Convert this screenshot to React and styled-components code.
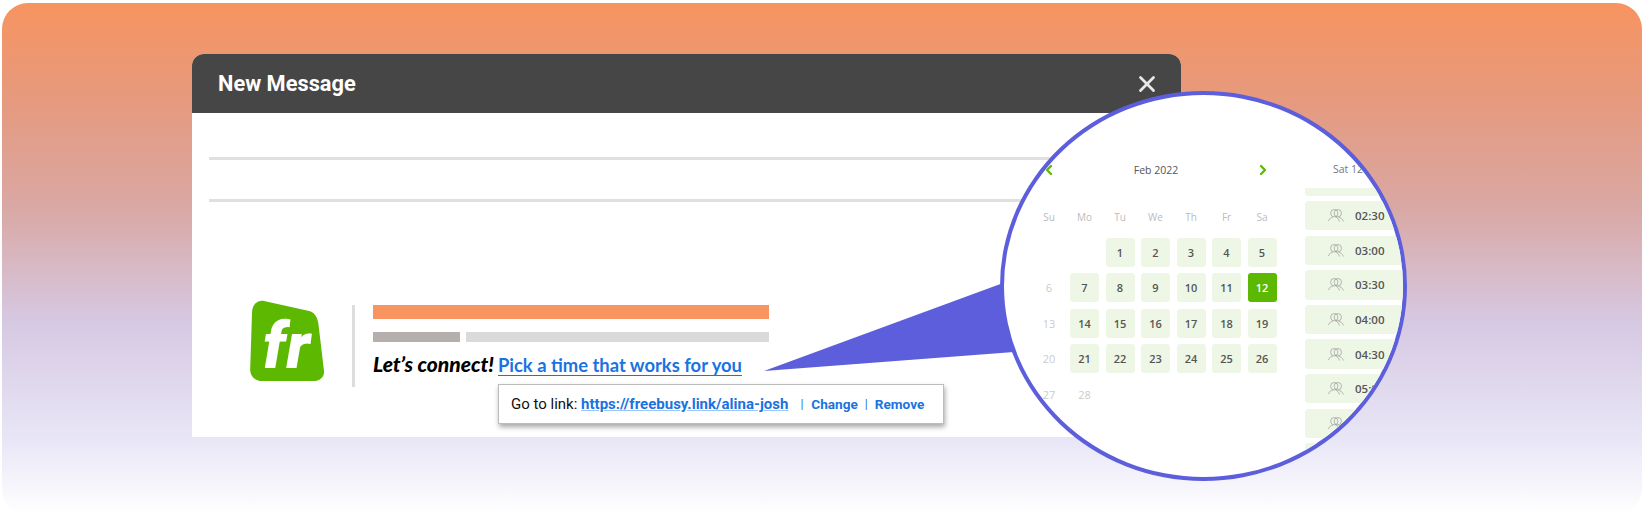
import React from 'react'
import styled, { createGlobalStyle } from 'styled-components'
import { ChevronLeft, ChevronRight, X } from 'lucide-react'

const GlobalStyle = createGlobalStyle`
  html, body { margin: 0; padding: 0; background: #fff; }
  body { font-family: "Roboto", "Liberation Sans", sans-serif; }
`
const Page = styled.div`
  width: 1644px;
  height: 528px;
  padding: 3px 2px 13px;
  box-sizing: border-box;
  overflow: hidden;
`
const Panel = styled.div`
  position: relative;
  height: 100%;
  padding: 51px 0 0 190px;
  box-sizing: border-box;
  border-radius: 26px;
  background: linear-gradient(180deg, #f79460 0%, #e59a80 20%, #d9a8a4 40%, #d6c8e2 62%, #e8e6f6 85%, #ffffff 100%);
`
const Window = styled.div`
  position: relative;
  width: 989px;
  height: 383px;
  background: #fff;
  border-radius: 12px 12px 0 0;
`
const Header = styled.div`
  height: 59px;
  padding: 0 21px 0 26px;
  display: flex;
  align-items: center;
  justify-content: space-between;
  background: #464646;
  border-radius: 12px 12px 0 0;
  color: #fff;
`
const Title = styled.div`
  font-size: 21.8px;
  font-weight: 700;
`
const Field = styled.div`
  height: ${(props) => props.height}px;
  margin: 0 16px 0 17px;
  border-bottom: 3px solid #e0e0e0;
`
const Signature = styled.div`
  display: flex;
  gap: 28px;
  padding: 99px 0 0 58px;
`
const Copy = styled.div`
  width: 396px;
  height: 82px;
  margin-top: 4px;
  padding-left: 18px;
  border-left: 3px solid #dddddd;
`
const BrandBar = styled.div`
  height: 13.5px;
  margin-bottom: 13.5px;
  background: #f79460;
`
const MetaRow = styled.div`
  display: flex;
  gap: 6px;
  height: 10px;
`
const Meta = styled.div`
  height: 10px;
  width: ${(props) => props.width}px;
  flex: ${(props) => (props.width ? 'none' : 1)};
  background: ${(props) => props.color};
`
const Connect = styled.div`
  margin-top: 10px;
  font-family: "Lato", sans-serif;
  font-size: 21px;
  line-height: 24px;
  font-weight: 900;
  font-style: italic;
  white-space: nowrap;
  color: #000;
`
const PickLink = styled.a`
  margin-left: 4px;
  font-size: 18.4px;
  font-style: normal;
  font-weight: 700;
  color: #1a73e0;
  text-decoration: underline;
  text-underline-offset: 3px;
`
const LinkPopup = styled.div`
  position: absolute;
  left: 306px;
  top: 330px;
  width: 446px;
  height: 40px;
  padding-left: 12px;
  box-sizing: border-box;
  display: flex;
  align-items: center;
  background: #fff;
  border: 1px solid #bcbcbc;
  box-shadow: 1px 3px 5px rgba(0, 0, 0, 0.35);
  font-size: 15px;
  color: #111;
  white-space: pre;
`
const PopupUrl = styled.a`
  font-weight: 700;
  color: #1a73e0;
  text-decoration: underline;
  text-decoration-color: #9cc6f5;
`
const PopupAction = styled.span`
  font-weight: 700;
  font-size: 13.6px;
  color: #1a73e0;
`
const Pipe = styled.span`
  margin: ${(props) => (props.wide ? '0 8px 0 12px' : '0 7px 0 7px')};
  font-size: 12px;
  color: #1a73e0;
`
const Tail = styled.svg`
  position: absolute;
  left: 762px;
  top: 276px;
`
const Bubble = styled.div`
  position: absolute;
  left: 998px;
  top: 88px;
  width: 407px;
  height: 390px;
  padding: 64.5px 0 0 30.5px;
  box-sizing: border-box;
  display: flex;
  gap: 28.5px;
  border: 4.5px solid #5c5edc;
  border-radius: 50%;
  background: #fff;
  overflow: hidden;
  font-family: "Open Sans", sans-serif;
`
const Calendar = styled.div`
  width: 242px;
  flex: none;
`
const MonthRow = styled.div`
  height: 20px;
  margin-bottom: 22.5px;
  padding: 0 5px 0 6px;
  display: flex;
  align-items: center;
  justify-content: space-between;
  font-size: 10.5px;
  color: #555;
`
const DayGrid = styled.div`
  display: grid;
  grid-template-columns: repeat(7, 29px);
  grid-auto-rows: 29px;
  gap: 6.5px;
`
const Weekday = styled.div`
  display: flex;
  align-items: center;
  justify-content: center;
  font-size: 10px;
  color: #bbb;
`
const Day = styled.div`
  display: flex;
  align-items: center;
  justify-content: center;
  border-radius: 3px;
  font-size: 11px;
  font-weight: ${(props) => (props.state === 'off' ? 400 : 600)};
  color: ${(props) => (props.state === 'off' ? '#ccc' : props.state === 'picked' ? '#fff' : '#555')};
  background: ${(props) => (props.state === 'off' ? 'transparent' : props.state === 'picked' ? '#5cb800' : '#eef7e6')};
`
const Times = styled.div`
  width: 180px;
  flex: none;
`
const TimesDate = styled.div`
  height: 20px;
  margin: -1px 0 9px 28px;
  display: flex;
  align-items: center;
  font-size: 10.5px;
  color: #777;
`
const SlotList = styled.div`
  height: 320px;
  overflow: hidden;
  display: flex;
  flex-direction: column;
  gap: 5.3px;
`
const Slot = styled.div`
  flex: none;
  height: 29.3px;
  padding-left: 23px;
  display: flex;
  align-items: center;
  gap: 11px;
  border-radius: 3px;
  background: #eef7e6;
  font-size: 11.5px;
  font-weight: 600;
  color: #555;
  &:first-child {
    margin-top: -21px;
  }
`

const LogoMark = () => (
  <svg width="74" height="80" viewBox="0 0 74 80" overflow="visible">
    <path
      d="M2 12 C2 4 7 -1 14 0 L58 9.7 C64 11 67 15 68.3 22 L74 70 C74.5 76 70 80 63 80 L12 80 C5 80 0 75 0.2 68 Z"
      fill="#5cb800"
    />
    <text x="13" y="67" fontFamily="Roboto, sans-serif" fontSize="64" fontWeight="900" fontStyle="italic" fill="#fff" letterSpacing="1">fr</text>
  </svg>
)

const PeopleIcon = () => (
  <svg width="16" height="13" viewBox="0 0 16 13" fill="none" stroke="#9a9a9a" strokeWidth="0.7">
    <circle cx="6.3" cy="4.2" r="3.7" />
    <circle cx="9.8" cy="4.2" r="3.7" />
    <path d="M0.4 12 C1 9.5 3 9 5.2 7.8 M7.4 7.8 C9 9 10.8 9.5 11.4 12.5" />
    <path d="M10.5 8 C12.5 9 14.5 9.5 15.4 12.5" />
  </svg>
)

const weekdays = ['Su', 'Mo', 'Tu', 'We', 'Th', 'Fr', 'Sa']
const times = ['02:30', '03:00', '03:30', '04:00', '04:30', '05:00', '05:30', '06:00']
const offDays = [6, 13, 20, 27, 28]

const App = () => {
  const days = Array.from({ length: 28 }, (_, i) => i + 1)
  return (
    <Page>
      <GlobalStyle />
      <Panel>
        <Window>
          <Header>
            <Title>New Message</Title>
            <X size={26} color="#e8e8e8" strokeWidth={2.6} />
          </Header>
          <Field height={44} />
          <Field height={39} />
          <Signature>
            <LogoMark />
            <Copy>
              <BrandBar />
              <MetaRow>
                <Meta width={87} color="#b5b0ad" />
                <Meta color="#dadada" />
              </MetaRow>
              <Connect>
                Let’s connect!<PickLink>Pick a time that works for you</PickLink>
              </Connect>
            </Copy>
          </Signature>
          <LinkPopup>
            Go to link: <PopupUrl>https://freebusy.link/alina-josh</PopupUrl>
            <Pipe wide>|</Pipe>
            <PopupAction>Change</PopupAction>
            <Pipe>|</Pipe>
            <PopupAction>Remove</PopupAction>
          </LinkPopup>
        </Window>
        <Tail width="260" height="100" viewBox="0 0 260 100">
          <polygon points="0,92 250,0 250,73" fill="#5c5edc" />
        </Tail>
        <Bubble>
          <Calendar>
            <MonthRow>
              <ChevronLeft size={16} color="#5cb800" strokeWidth={3.5} />
              Feb 2022
              <ChevronRight size={16} color="#5cb800" strokeWidth={3.5} />
            </MonthRow>
            <DayGrid>
              {weekdays.map((d) => (
                <Weekday key={d}>{d}</Weekday>
              ))}
              <div />
              <div />
              {days.map((n) => (
                <Day key={n} state={n === 12 ? 'picked' : offDays.includes(n) ? 'off' : 'open'}>
                  {n}
                </Day>
              ))}
            </DayGrid>
          </Calendar>
          <Times>
            <TimesDate>Sat 12 Feb</TimesDate>
            <SlotList>
              <Slot />
              {times.map((t) => (
                <Slot key={t}>
                  <PeopleIcon />
                  {t}
                </Slot>
              ))}
            </SlotList>
          </Times>
        </Bubble>
      </Panel>
    </Page>
  )
}

export default App
